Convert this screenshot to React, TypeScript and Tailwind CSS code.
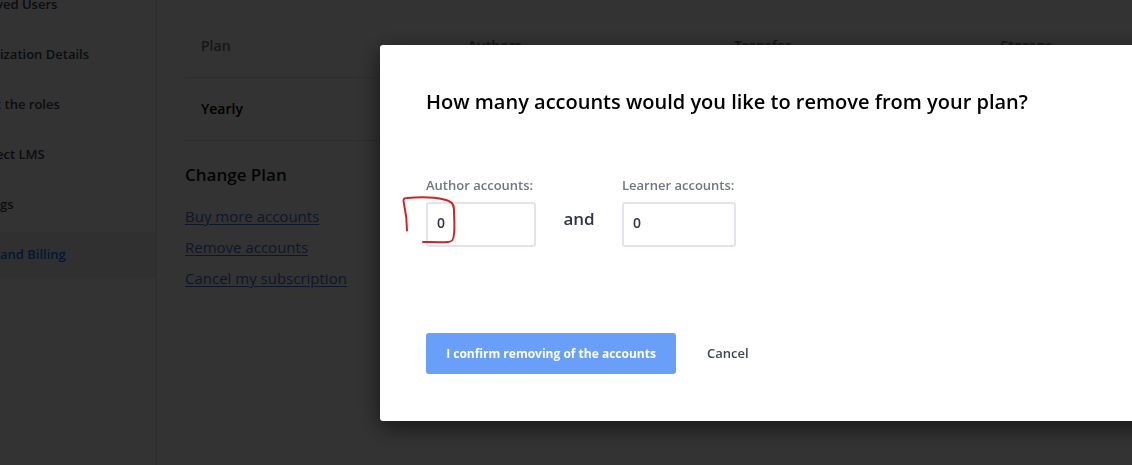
const menu = [
  { label: 'ved Users', inset: '-ml-1' },
  { label: 'ization Details', inset: 'ml-0' },
  { label: 't the roles', inset: '-ml-1' },
  { label: 'ect LMS', inset: '-ml-1' },
  { label: 'gs', inset: 'ml-0' },
  { label: 'and Billing', inset: 'ml-0', active: true },
];

const columns = ['Plan', 'Authors', 'Transfer', 'Storage'];
const links = ['Buy more accounts', 'Remove accounts', 'Cancel my subscription'];

function Sidebar() {
  return (
    <nav className="w-[157px] shrink-0 overflow-hidden border-r border-[#dfe1e8] bg-[#fdfdfd]">
      <ul className="-mt-[18px] flex flex-col gap-1">
        {menu.map((item) => (
          <li key={item.label}>
            <a
              href="#"
              className={
                item.active
                  ? 'flex h-[46px] items-center bg-[#f0f0f0] text-[13px] font-semibold text-[#1d6ff2]'
                  : 'flex h-[46px] items-center text-[13px] font-semibold text-[#3f4254]'
              }
            >
              <span className={`whitespace-nowrap ${item.inset}`}>{item.label}</span>
            </a>
          </li>
        ))}
      </ul>
    </nav>
  );
}

function Billing() {
  return (
    <main className="min-w-0 flex-1 overflow-hidden pt-[14px] pl-7">
      <table className="w-full min-w-[1066px] table-fixed border-collapse text-left text-[14px]">
        <thead>
          <tr className="h-[63px] border-b border-[#dfe1e8] text-[#6e7480]">
            {columns.map((name) => (
              <th key={name} className="px-4 font-semibold">
                {name}
              </th>
            ))}
          </tr>
        </thead>
        <tbody>
          <tr className="h-[63px] border-b border-[#dfe1e8] font-semibold text-black">
            <td className="px-4">Yearly</td>
            <td />
            <td />
            <td />
          </tr>
        </tbody>
      </table>
      <h2 className="mt-[22px] text-[17px] leading-6 font-semibold text-[#12151f]">Change Plan</h2>
      <ul className="mt-[14px] text-[15px] leading-[31px] text-[#4a6fd0]">
        {links.map((name) => (
          <li key={name}>
            <a href="#" className="underline underline-offset-2">
              {name}
            </a>
          </li>
        ))}
      </ul>
    </main>
  );
}

function AccountField({ id, label }: { id: string; label: string }) {
  return (
    <div className="flex flex-col gap-[7px]">
      <label htmlFor={id} className="text-[13px] leading-5 font-semibold text-[#6f7683]">
        {label}
      </label>
      <input
        id={id}
        defaultValue="0"
        className="h-[45px] w-full rounded-[3px] border-2 border-[#e2e4ed] bg-white px-[9px] pb-1 text-[14px] font-semibold text-[#2f3542] outline-none"
      />
    </div>
  );
}

function RemoveDialog() {
  return (
    <div className="fixed inset-0 overflow-hidden bg-black/80 pt-[45px] pl-[380px]">
      <section
        role="dialog"
        aria-labelledby="dialog-title"
        className="-mr-10 rounded-[3px] bg-white px-[46px] pt-[42px] pb-[47px] shadow-[0_6px_24px_rgba(0,0,0,0.6)]"
      >
        <h1 id="dialog-title" className="text-[20px] leading-[30px] font-semibold whitespace-nowrap text-black">
          How many accounts would you like to remove from your plan?
        </h1>
        <div className="relative mt-[58px] flex items-start">
          <div className="w-[110px]">
            <AccountField id="authors" label="Author&nbsp;accounts:" />
          </div>
          <span className="mt-8 w-[86px] text-center text-[17px] leading-6 font-semibold text-[#2f3542]">and</span>
          <div className="w-[114px]">
            <AccountField id="learners" label="Learner&nbsp;accounts:" />
          </div>
          <svg
            aria-hidden="true"
            viewBox="0 0 56 50"
            className="pointer-events-none absolute top-5 -left-6 h-[50px] w-14 fill-none stroke-[#d02427]"
            strokeWidth="2"
            strokeLinecap="round"
            strokeLinejoin="round"
          >
            <path d="M5 35.500C5 25 4 18 2 9C1 5 1 3 5 3C17 2 32 2 42 4.500C50 6.500 52 9 52 15C52 24 53 31 52 39C51.500 45 50 47 46 47C38 47.500 29 47 21 47" />
          </svg>
        </div>
        <div className="mt-[86px] flex items-center gap-[31px]">
          <button className="h-[41px] w-[250px] rounded-[3px] bg-[#699ff9] text-[12px] font-bold whitespace-nowrap text-white">
            I confirm removing of the accounts
          </button>
          <button className="text-[13px] font-semibold text-[#3f4654]">Cancel</button>
        </div>
      </section>
    </div>
  );
}

export default function App() {
  return (
    <div className="flex min-h-screen overflow-hidden bg-white font-['Open_Sans',sans-serif]">
      <Sidebar />
      <Billing />
      <RemoveDialog />
    </div>
  );
}
